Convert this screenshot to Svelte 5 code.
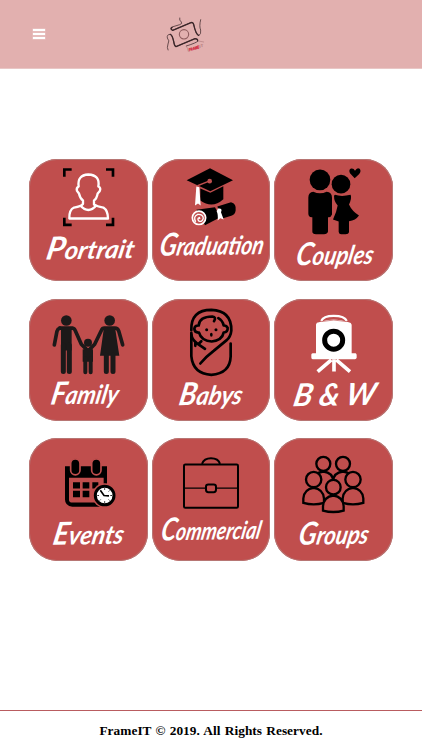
<script>
  const tiles = [
    { id: 'portrait', label: 'Portrait', x: 60, y: 313, w: 264, size: 76, box: '12 12 356 366' },
    { id: 'graduation', label: 'Graduation', x: 28, y: 302, w: 312, size: 78, box: '9 12 356 366' },
    { id: 'couples', label: 'Couples', x: 72, y: 330, w: 232, size: 78, box: '10 12 356 366' },
    { id: 'family', label: 'Family', x: 74, y: 328, w: 202, size: 78, box: '12 12 356 366' },
    { id: 'babys', label: 'Babys', x: 86, y: 330, w: 190, size: 78, box: '9 12 356 366' },
    { id: 'bw', label: 'B & W', x: 64, y: 333, w: 246, size: 92, box: '10 12 356 366' },
    { id: 'events', label: 'Events', x: 80, y: 330, w: 212, size: 78, box: '12 10 356 366' },
    { id: 'commercial', label: 'Commercial', x: 32, y: 317, w: 300, size: 74, box: '9 10 356 366' },
    { id: 'groups', label: 'Groups', x: 80, y: 330, w: 210, size: 78, box: '10 10 356 366' }
  ];
  const people = [
    [158, 87, 23], [217, 87, 23], [129, 134, 25], [247, 134, 25], [188, 157, 24]
  ];
</script>

<div class="page">
  <header>
    <button class="menu" aria-label="Menu"><span></span><span></span><span></span></button>
    <svg class="logo" viewBox="0 0 150 150" aria-label="FrameIT">
      <g fill="none" stroke="#3b2629" stroke-linecap="round" stroke-linejoin="round">
        <path d="M59 24 Q57 31 64 36 Q68 41 59 44 L36 51 Q29 57 38 61 L92 38 Q99 36 101 43 Q108 75 116 77 Q124 73 122 60 Q117 50 122 29" stroke-width="2.2" />
        <path d="M36 52 Q29 57 38 61 L93 38 Q99 36 101 44 Q108 74 116 76" stroke-width="4" />
        <path d="M24 120 Q20 113 24 102 Q30 92 22 84 Q20 73 31 73 Q37 75 41 94 Q43 108 48 110 L105 86 Q114 86 113 93 Q111 98 79 108" stroke-width="2.2" />
        <path d="M31 73 Q37 75 41 94 Q43 108 48 110 L105 86 Q114 86 113 93" stroke-width="4" />
        <circle cx="72" cy="73" r="14" stroke="#8e5c5e" stroke-width="3.4" />
        <path d="M79 109 Q84 114 85 124 M116 93 L131 96" stroke="#a16d70" stroke-width="1.5" />
      </g>
      <g transform="translate(88 124) rotate(-18)">
        <text class="logo-text" textLength="32" lengthAdjust="spacingAndGlyphs" fill="#d12f43" stroke="#d12f43" stroke-width="1">FRAME</text>
        <text class="logo-text thin" x="33" textLength="12" lengthAdjust="spacingAndGlyphs" fill="#925659">IT</text>
      </g>
    </svg>
  </header>

  <main>
    {#each tiles as t (t.id)}
      <a class="tile" href="#{t.id}">
        <svg viewBox={t.box}>
          {#if t.id === 'portrait'}
            <path d="M118 65V43H140M243 43H264V65M118 188V209H140M243 209H264V188" fill="none" stroke="#000" stroke-width="8" />
            <g fill="none" stroke="#fff" stroke-width="7" stroke-linejoin="round">
              <path d="M161 94 Q156 60 190 58 Q226 60 220 94 Q229 98 224 108 L218 115 Q215 131 207 136 V148 Q216 154 235 157 Q249 166 249 190 H133 Q132 164 147 157 Q170 153 174 146 V136 Q165 130 162 115 L156 107 Q153 98 161 94Z" />
              <path d="M166 151 Q190 178 214 151" />
            </g>
          {:else if t.id === 'graduation'}
            <path d="M113 75 L183 39 L252 75 L184 108Z" />
            <path d="M154 100 L184 113 L223 93 V132 Q190 162 154 136Z" />
            <path d="M182 77 L147 91 V108" fill="none" stroke="#c04e4d" stroke-width="4" />
            <circle cx="182" cy="78" r="7" fill="#c04e4d" />
            <path d="M142 94 L151 96 L155 151 L147 145 L138 151Z" fill="#fff" />
            <path d="M142 164 L198 156 L214 186 L168 210Z" />
            <path d="M205 154 L246 141 Q263 145 260 166 Q258 179 247 182 L220 190Z" />
            <path d="M207 160 Q222 158 216 171 L224 193 L214 189 L206 196 Q208 178 203 168Z" fill="#fff" />
            <circle cx="150" cy="188" r="20" fill="#c04e4d" stroke="#fff" stroke-width="5" />
            <path d="M140 200 Q132 184 145 178 Q162 176 163 189 Q160 201 150 198 Q143 190 151 187 L153 191" fill="none" stroke="#fff" stroke-width="4" />
          {:else if t.id === 'couples'}
            <circle cx="148" cy="74" r="31" /><circle cx="211" cy="87" r="28" />
            <path d="M128 110 Q148 119 168 110 Q184 112 184 128 V178 Q180 188 172 186 V229 Q170 237 160 237 H136 Q125 237 125 229 V186 Q113 187 113 175 V127 Q113 112 128 110Z" />
            <path d="M193 119 Q212 126 240 119 Q244 130 235 148 Q244 168 265 181 Q255 196 235 198 V231 Q234 237 225 237 H211 Q204 237 204 230 V199 L187 193 Q198 170 201 151 Q190 140 190 122Z" />
            <path d="M252 69 L238 54 Q233 44 241 40 Q249 38 253 47 Q259 36 267 41 Q273 48 265 57Z" />
          {:else if t.id === 'family'}
            <g fill="#1c1919" stroke="#1c1919" stroke-linecap="round" stroke-linejoin="round">
              <circle cx="124" cy="76" r="16" stroke="none" /><circle cx="254" cy="76" r="16" stroke="none" /><circle cx="189" cy="143" r="12" stroke="none" />
              <path d="M104 99 H144 Q149 100 151 107 L169 147 L186 164 H193 L209 147 L229 106 Q232 99 238 99 H270 Q278 99 281 107 L293 149" fill="none" stroke-width="11" />
              <path d="M104 99 Q98 101 96 108 L88 149" fill="none" stroke-width="11" />
              <path d="M108 96 H140 V166 H108Z M173 162 H204 V200 H173Z M237 96 H270 L283 182 H225Z" stroke="none" />
              <path d="M115 150V229M133 150V229M244 180V229M264 180V229" stroke-width="15" />
              <path d="M181 190V231M197 190V231" stroke-width="12" />
            </g>
          {:else if t.id === 'babys'}
            <g fill="none" stroke="#000" stroke-width="8" stroke-linecap="round" stroke-linejoin="round">
              <path d="M127 105 Q125 44 187 44 Q248 46 247 106 Q245 124 234 134 L194 167 Q170 185 154 205" />
              <path d="M127 113 V183 Q132 236 187 239 Q243 235 245 184 V145" />
              <path d="M127 118 Q129 134 145 145 L168 161 M139 141 V152" />
              <path d="M195 78 Q203 66 190 64 Q151 64 149 91 Q137 90 136 101 Q137 113 150 112 Q156 136 188 139 Q220 135 224 112 Q237 111 236 98 Q232 90 224 91 Q221 76 208 69" />
              <path d="M157 138 L150 145" />
            </g>
            <circle cx="173" cy="104" r="4.5" /><circle cx="201" cy="104" r="4.5" /><ellipse cx="187" cy="119" rx="4" ry="6" />
          {:else if t.id === 'bw'}
            <path d="M152 77 Q158 62 189 62 Q222 62 228 77" fill="none" stroke="#fff" stroke-width="7" />
            <path d="M145 81 Q189 65 234 81 Q242 82 243 89 V174 H255 Q258 175 258 180 V188 Q257 192 253 192 H126 Q122 192 122 187 V178 Q123 174 127 174 H136 V88 Q137 81 145 81Z" fill="#fff" />
            <path d="M153 79 Q189 70 227 79" fill="none" stroke="#c04e4d" stroke-width="2" />
            <circle cx="189" cy="135" r="27" fill="#fff" stroke="#000" stroke-width="15" />
            <path d="M182 194 L141 229 M197 194 L238 229 M190 192 V229" fill="none" stroke="#fff" stroke-width="11" />
          {:else if t.id === 'events'}
            <path fill-rule="evenodd" d="M120 94 H246 V216 H142 Q120 213 120 194Z M132 129 V196 Q133 203 142 203 H236 V129Z" />
            <g stroke="#c04e4d" stroke-width="5"><rect x="137" y="72" width="28" height="48" rx="14" /><rect x="200" y="72" width="28" height="48" rx="14" /></g>
            <path d="M144 142 H165 V161 H144Z M173 142 H193 V161 H173Z M202 142 H220 V161 H202Z M144 168 H165 V187 H144Z M173 168 H193 V187 H173Z" />
            <circle cx="239" cy="182" r="37" fill="#c04e4d" />
            <circle cx="239" cy="182" r="28" fill="#fff" stroke="#000" stroke-width="9" />
            <path d="M226 166 L237 182 L252 183" fill="none" stroke="#000" stroke-width="5" />
            <path d="M239 160V165M239 199V204M217 182H222M256 182H261M224 197L227 194M254 197L251 194M254 167L251 170" stroke="#000" stroke-width="2.5" />
          {:else if t.id === 'commercial'}
            <g fill="none" stroke="#000" stroke-width="6">
              <rect x="105" y="89" width="162" height="130" rx="4" />
              <path d="M159 87 Q165 70 186 70 Q208 70 213 87" />
              <path d="M105 160 H171 M201 160 H267" stroke-width="4" />
              <rect x="171" y="149" width="30" height="23" rx="7" />
            </g>
          {:else}
            <g fill="#c04e4d" stroke="#000" stroke-width="7">
              {#each people as [x, y, r], i}
                {#if i < 2}
                  <path d="M{x - 31} {y + 55} Q{x - 29} {y + 26} {x} {y + 23} Q{x + 29} {y + 26} {x + 31} {y + 55}" fill="none" />
                {:else}
                  <path d="M{x - 31} {y + 70} V{y + 57} Q{x - 29} {y + 29} {x} {y + 25} Q{x + 29} {y + 29} {x + 31} {y + 57} V{y + 70} Q{x} {y + 79} {x - 31} {y + 70}Z" />
                {/if}
                <circle cx={x} cy={y} r={r - 2} />
              {/each}
            </g>
          {/if}
          <g transform="translate({t.x} {t.y}) rotate(-1) skewX(-12)">
            <text class="label" font-size={t.size} textLength={t.w} lengthAdjust="spacingAndGlyphs"><tspan font-size="94">{t.label[0]}</tspan>{t.label.slice(1)}</text>
          </g>
        </svg>
      </a>
    {/each}
  </main>

  <footer>FrameIT © 2019. All Rights Reserved.</footer>
</div>

<style>
  :global(body) { margin: 0; background: #fff; }
  .page { width: 422px; height: 750px; display: flex; flex-direction: column; overflow: hidden; }
  header { height: 68px; flex: none; display: flex; align-items: flex-start; background: #e2b0af; border-bottom: 1px solid #e9c7c6; box-sizing: content-box; }
  .menu { margin: 29px 0 0 33px; width: 12px; padding: 0; border: 0; background: none; display: flex; flex-direction: column; gap: 2px; }
  .menu span { height: 2px; background: #fff; box-shadow: 0 0 0 0.5px rgba(255, 255, 255, 0.35); }
  .logo { width: 50px; height: 50px; margin: 10px 0 0 115px; }
  .logo-text { font: italic bold 12px "Liberation Sans", Arial, sans-serif; }
  .thin { font-weight: normal; }
  main { flex: 1; padding: 90px 29px 0; display: grid; grid-template-columns: repeat(3, 118.67px); grid-auto-rows: 122.4px; column-gap: 4px; row-gap: 17.3px; align-content: start; }
  .tile { display: block; border-radius: 28px; background: #c04e4d; box-shadow: inset 0 0 0 1px #b77674; }
  .tile svg { display: block; width: 100%; height: 100%; overflow: visible; }
  .label { font-family: Lato, "Liberation Sans", sans-serif; font-style: italic; font-weight: 700; fill: #fff; }
  footer { height: 39px; flex: none; border-top: 1px solid #b95c60; text-align: center; font: bold 13.33px/39px "Liberation Serif", "Times New Roman", serif; letter-spacing: 0.05px; word-spacing: 0.8px; color: #000; }
</style>
